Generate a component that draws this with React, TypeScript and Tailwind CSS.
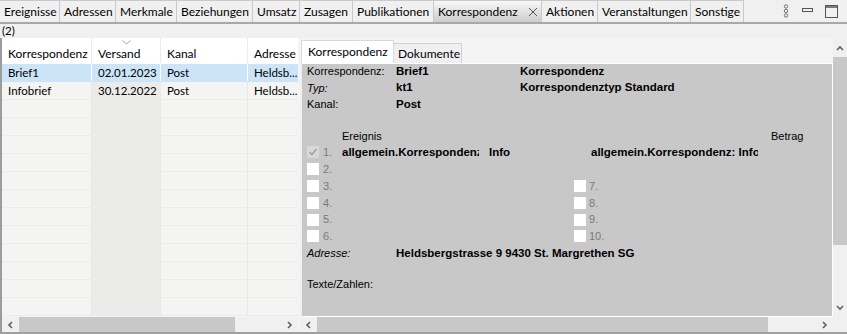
import { FC, ReactNode } from "react"

const ui = "font-['Lato',sans-serif]"
const arial = "font-['Liberation_Sans',Arial,sans-serif]"

const topTabs = [
  { label: "Ereignisse", w: "w-[60px]" },
  { label: "Adressen", w: "w-[56px]" },
  { label: "Merkmale", w: "w-[61px]" },
  { label: "Beziehungen", w: "w-[76px]" },
  { label: "Umsatz", w: "w-[47px]" },
  { label: "Zusagen", w: "w-[53px]" },
  { label: "Publikationen", w: "w-[81px]" },
  { label: "Korrespondenz", w: "w-[108px]", active: true },
  { label: "Aktionen", w: "w-[56px]" },
  { label: "Veranstaltungen", w: "w-[93px]" },
  { label: "Sonstige", w: "w-[53px]" }
]

const rows = [
  { name: "Brief1", date: "02.01.2023", kanal: "Post", adr: "Heldsb...", selected: true },
  { name: "Infobrief", date: "30.12.2022", kanal: "Post", adr: "Heldsb..." }
]

const Chevron: FC<{ dir: "up" | "down" | "left" | "right" }> = ({ dir }) => {
  const d = {
    up: "M1 5 L4 2 L7 5",
    down: "M1 2 L4 5 L7 2",
    left: "M5 1 L2 4 L5 7",
    right: "M2 1 L5 4 L2 7"
  }[dir]
  return (
    <svg width="8" height="8" viewBox="0 0 8 8" className="shrink-0">
      <path d={d} fill="none" stroke="#606060" strokeWidth="1.6" />
    </svg>
  )
}

const HScroll: FC<{ thumbWidth: string }> = ({ thumbWidth }) => (
  <div className="h-[15px] flex items-center bg-[#f0f0f0]">
    <div className="w-[17px] flex justify-center">
      <Chevron dir="left" />
    </div>
    <div className={`h-[15px] bg-[#c8c8c8] ${thumbWidth}`} />
    <div className="flex-1" />
    <div className="w-[17px] flex justify-center">
      <Chevron dir="right" />
    </div>
  </div>
)

const Box: FC<{ checked?: boolean }> = ({ checked }) => (
  <div
    className={`w-[12px] h-[12px] shrink-0 flex items-center justify-center ${
      checked ? "bg-[#d8d8d8]" : "bg-white"
    }`}
  >
    {checked && (
      <svg width="10" height="10" viewBox="0 0 10 10">
        <path d="M1.5 5 L4 7.5 L8.5 2" fill="none" stroke="#9a9a9a" strokeWidth="1.3" />
      </svg>
    )}
  </div>
)

const Line: FC<{ children?: ReactNode; className?: string }> = ({ children, className }) => (
  <div className={`flex items-center h-[16.5px] whitespace-nowrap ${className ?? ""}`}>{children}</div>
)

export default function App() {
  return (
    <div className={`w-[847px] h-[334px] overflow-hidden bg-[#f0f0f0] text-black flex flex-col ${ui}`}>
      {/* top tabs */}
      <div className="h-[24px] flex border-b-2 border-[#a8a8a8] bg-[#f0f0f0]">
        {topTabs.map((t) => (
          <div
            key={t.label}
            className={`${t.w} h-[22px] flex items-center pl-[4px] text-[12px] border-r border-t border-[#c9c9c9] ${
              t.active ? "bg-linear-to-b from-[#f8f8f8] to-[#cdcdcd]" : "bg-[#f0f0f0]"
            }`}
          >
            {t.label}
            {t.active && (
              <svg width="10" height="10" viewBox="0 0 10 10" className="ml-[10px]">
                <path d="M1 1 L9 9 M9 1 L1 9" stroke="#555" strokeWidth="1" />
              </svg>
            )}
          </div>
        ))}
        <div className="flex-1" />
        <div className="flex items-center pr-[9px]">
          <svg width="6" height="14" viewBox="0 0 6 14" className="mr-[13px]">
            <circle cx="3" cy="2.5" r="1.7" fill="none" stroke="#666" strokeWidth="0.9" />
            <circle cx="3" cy="7" r="1.7" fill="none" stroke="#666" strokeWidth="0.9" />
            <circle cx="3" cy="11.5" r="1.7" fill="none" stroke="#666" strokeWidth="0.9" />
          </svg>
          <svg width="11" height="12" viewBox="0 0 11 12" className="mr-[12px]">
            <rect x="0.5" y="3.5" width="10" height="3" fill="none" stroke="#555" />
          </svg>
          <svg width="13" height="13" viewBox="0 0 13 13">
            <rect x="0.5" y="0.5" width="12" height="12" fill="none" stroke="#555" />
            <line x1="0.5" y1="2" x2="12.5" y2="2" stroke="#555" strokeWidth="1.5" />
          </svg>
        </div>
      </div>

      {/* count */}
      <div className="h-[14px] pl-[2px] text-[11.5px] leading-[14px]">(2)</div>

      {/* main */}
      <div className="flex flex-1 border-b-2 border-[#a0a0a0]">
        {/* left table */}
        <div className="w-[298px] flex flex-col border-l-2 border-[#9c9c9c] text-[11.5px]">
          <div className="h-[26px] flex bg-white text-[12px]">
            <div className="w-[90px] pl-[6px] pt-[5px] border-r border-[#ececec] flex items-center">Korrespondenz</div>
            <div className="w-[69px] pl-[6px] pt-[5px] border-r border-[#ececec] flex items-center relative">
              Versand
              <svg width="9" height="5" viewBox="0 0 9 5" className="absolute left-[30px] top-[2px]">
                <path d="M0.5 0.5 L4.5 4 L8.5 0.5" fill="none" stroke="#999" strokeWidth="0.9" />
              </svg>
            </div>
            <div className="w-[87px] pl-[6px] pt-[5px] border-r border-[#ececec] flex items-center">Kanal</div>
            <div className="flex-1 pl-[6px] pt-[5px] flex items-center">Adresse</div>
          </div>
          <div className="flex-1 bg-[#f4f4f3] overflow-hidden">
            {Array.from({ length: 14 }).map((_, i) => {
              const r = rows[i]
              const sel = r?.selected
              const sep = sel ? "border-white" : "border-[#e8e8e8]"
              return (
                <div
                  key={i}
                  className={`h-[18px] flex border-b ${sel ? "bg-[#cce4f7] border-[#cce4f7]" : "border-[#ebebea]"}`}
                >
                  <div className={`w-[90px] pl-[6px] flex items-center border-r ${sep}`}>{r?.name}</div>
                  <div className={`w-[69px] pl-[6px] flex items-center border-r ${sep} ${sel ? "" : "bg-[#ebebea]"}`}>
                    {r?.date}
                  </div>
                  <div className={`w-[87px] pl-[6px] flex items-center border-r ${sep}`}>{r?.kanal}</div>
                  <div className="flex-1 pl-[6px] flex items-center">{r?.adr}</div>
                </div>
              )
            })}
          </div>
          <HScroll thumbWidth="w-[216px]" />
        </div>

        <div className="w-[2px] bg-[#f4f4f4]" />

        {/* right panel */}
        <div className="flex-1 flex flex-col">
          <div className="flex flex-1">
            <div className="flex-1 flex flex-col">
              <div className="h-[25px] flex items-end pl-[1px] bg-[#f4f4f4] text-[12px]">
                <div className="w-[93px] h-[23px] bg-white border border-b-0 border-[#d9d9d9] pl-[6px] flex items-center">
                  Korrespondenz
                </div>
                <div className="w-[68px] h-[20px] bg-[#f0f0f0] border border-l-0 border-b-0 border-[#d0d0d0] pl-[4px] flex items-center">
                  Dokumente
                </div>
              </div>
              <div className={`flex-1 ml-[2px] bg-[#c8c8c8] border-t border-r border-b border-white text-[11px] ${arial} overflow-hidden`}>
                <div className="pl-[5px] -mt-[1px]">
                  <Line>
                    <span className="w-[89px]">Korrespondenz:</span>
                    <span className="w-[124px] font-bold text-[11.5px]">Brief1</span>
                    <span className="font-bold text-[11.5px]">Korrespondenz</span>
                  </Line>
                  <Line>
                    <span className="w-[89px] italic">Typ:</span>
                    <span className="w-[124px] font-bold text-[11.5px]">kt1</span>
                    <span className="font-bold text-[11.5px]">Korrespondenztyp Standard</span>
                  </Line>
                  <Line>
                    <span className="w-[89px]">Kanal:</span>
                    <span className="font-bold text-[11.5px]">Post</span>
                  </Line>
                  <div className="h-[15.5px]" />
                  <div className="flex items-center h-[16px]">
                    <span className="ml-[35px] w-[429px]">Ereignis</span>
                    <span>Betrag</span>
                  </div>
                  {[1, 2, 3, 4, 5, 6].map((n) => (
                    <div key={n} className="flex items-center h-[16.8px] whitespace-nowrap">
                      <div className="w-[267px] flex items-center">
                        <Box checked={n === 1} />
                        <span className="ml-[4px] w-[19px] text-[#7a7a7a]">{n}.</span>
                        {n === 1 && (
                          <>
                            <span className="w-[137px] overflow-hidden font-bold text-[11.5px]">allgemein.Korrespondenz:</span>
                            <span className="ml-[10px] font-bold text-[11.5px]">Info</span>
                          </>
                        )}
                      </div>
                      {n === 1 && (
                        <span className="ml-[17px] w-[167px] overflow-hidden font-bold text-[11.5px]">
                          allgemein.Korrespondenz: Infobrief
                        </span>
                      )}
                      {n >= 3 && (
                        <div className="flex items-center">
                          <Box />
                          <span className="ml-[3px] text-[#7a7a7a]">{n + 4}.</span>
                        </div>
                      )}
                    </div>
                  ))}
                  <div className="flex items-center h-[16.8px] whitespace-nowrap">
                    <span className="w-[89px] italic">Adresse:</span>
                    <span className="font-bold text-[11.5px]">Heldsbergstrasse 9 9430 St. Margrethen SG</span>
                  </div>
                  <div className="h-[14px]" />
                  <Line>Texte/Zahlen:</Line>
                </div>
              </div>
            </div>
            {/* vertical scrollbar */}
            <div className="w-[14px] mt-[2px] mb-[1px] flex flex-col bg-[#f0f0f0]">
              <div className="h-[17px] flex items-center justify-center">
                <Chevron dir="up" />
              </div>
              <div className="h-[188px] bg-[#c8c8c8]" />
              <div className="flex-1" />
              <div className="h-[17px] flex items-center justify-center">
                <Chevron dir="down" />
              </div>
            </div>
          </div>
          <div className="flex">
            <div className="flex-1">
              <HScroll thumbWidth="w-[451px]" />
            </div>
            <div className="w-[14px] h-[15px] bg-[#f0f0f0]" />
          </div>
        </div>
      </div>
    </div>
  )
}
